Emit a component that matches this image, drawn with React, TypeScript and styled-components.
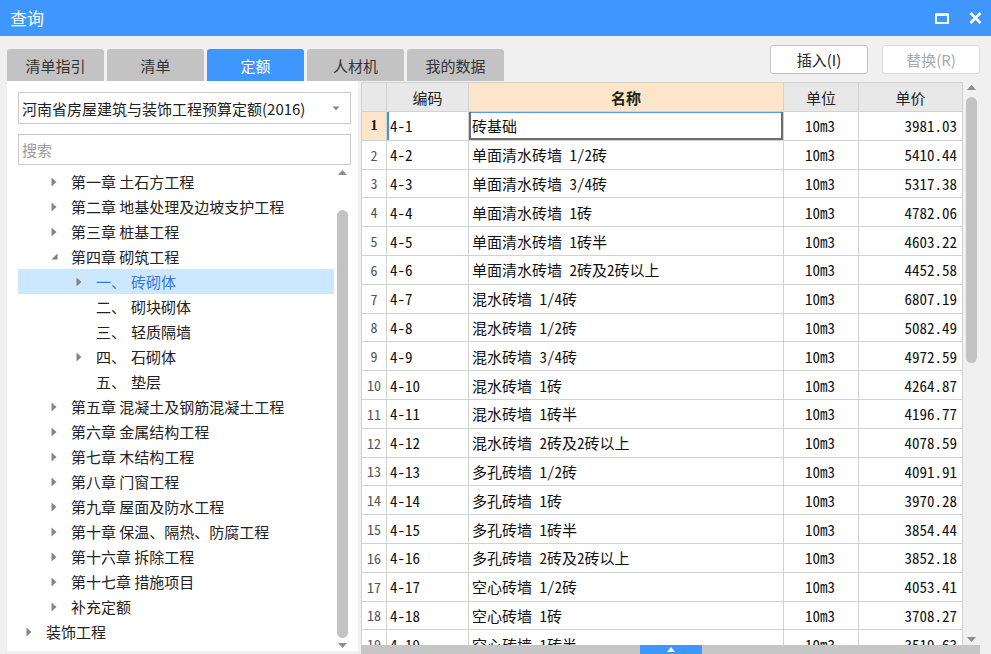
import React from "react";
import styled, { createGlobalStyle } from "styled-components";

const GlobalStyle = createGlobalStyle`
  html, body {
    margin: 0;
    padding: 0;
    overflow: hidden;
  }
  * {
    box-sizing: border-box;
  }
`;

const UI_FONT = `"Noto Sans CJK SC", "Noto Sans", sans-serif`;
const GRID_FONT = `"Noto Sans Mono CJK SC", "Noto Sans CJK SC", monospace`;

type TreeItem = {
  level: number;
  label: string;
  num?: string;
  arrow?: "closed" | "open";
  selected?: boolean;
};

const treeItems: TreeItem[] = [
  { level: 1, label: "第一章 土石方工程", arrow: "closed" },
  { level: 1, label: "第二章 地基处理及边坡支护工程", arrow: "closed" },
  { level: 1, label: "第三章 桩基工程", arrow: "closed" },
  { level: 1, label: "第四章 砌筑工程", arrow: "open" },
  { level: 2, num: "一、", label: "砖砌体", arrow: "closed", selected: true },
  { level: 2, num: "二、", label: "砌块砌体" },
  { level: 2, num: "三、", label: "轻质隔墙" },
  { level: 2, num: "四、", label: "石砌体", arrow: "closed" },
  { level: 2, num: "五、", label: "垫层" },
  { level: 1, label: "第五章 混凝土及钢筋混凝土工程", arrow: "closed" },
  { level: 1, label: "第六章 金属结构工程", arrow: "closed" },
  { level: 1, label: "第七章 木结构工程", arrow: "closed" },
  { level: 1, label: "第八章 门窗工程", arrow: "closed" },
  { level: 1, label: "第九章 屋面及防水工程", arrow: "closed" },
  { level: 1, label: "第十章 保温、隔热、防腐工程", arrow: "closed" },
  { level: 1, label: "第十六章 拆除工程", arrow: "closed" },
  { level: 1, label: "第十七章 措施项目", arrow: "closed" },
  { level: 1, label: "补充定额", arrow: "closed" },
  { level: 0, label: "装饰工程", arrow: "closed" },
];

const rows: [string, string, string, string][] = [
  ["4-1", "砖基础", "10m3", "3981.03"],
  ["4-2", "单面清水砖墙 1/2砖", "10m3", "5410.44"],
  ["4-3", "单面清水砖墙 3/4砖", "10m3", "5317.38"],
  ["4-4", "单面清水砖墙 1砖", "10m3", "4782.06"],
  ["4-5", "单面清水砖墙 1砖半", "10m3", "4603.22"],
  ["4-6", "单面清水砖墙 2砖及2砖以上", "10m3", "4452.58"],
  ["4-7", "混水砖墙 1/4砖", "10m3", "6807.19"],
  ["4-8", "混水砖墙 1/2砖", "10m3", "5082.49"],
  ["4-9", "混水砖墙 3/4砖", "10m3", "4972.59"],
  ["4-10", "混水砖墙 1砖", "10m3", "4264.87"],
  ["4-11", "混水砖墙 1砖半", "10m3", "4196.77"],
  ["4-12", "混水砖墙 2砖及2砖以上", "10m3", "4078.59"],
  ["4-13", "多孔砖墙 1/2砖", "10m3", "4091.91"],
  ["4-14", "多孔砖墙 1砖", "10m3", "3970.28"],
  ["4-15", "多孔砖墙 1砖半", "10m3", "3854.44"],
  ["4-16", "多孔砖墙 2砖及2砖以上", "10m3", "3852.18"],
  ["4-17", "空心砖墙 1/2砖", "10m3", "4053.41"],
  ["4-18", "空心砖墙 1砖", "10m3", "3708.27"],
  ["4-19", "空心砖墙 1砖半", "10m3", "3519.63"],
];

const tabs = ["清单指引", "清单", "定额", "人材机", "我的数据"];

const ArrowIcon = ({ open }: { open?: boolean }) =>
  open ? (
    <svg width="7" height="7" viewBox="0 0 7 7">
      <polygon points="6.5,0.5 6.5,6.5 0.5,6.5" fill="#7c7c7c" />
    </svg>
  ) : (
    <svg width="6" height="10" viewBox="0 0 6 10">
      <polygon points="0.5,0.5 5.5,5 0.5,9.5" fill="#858585" />
    </svg>
  );

const App = () => {
  return (
    <>
      <GlobalStyle />
      <Window>
        <TitleBar>
          <Title>查询</Title>
          <WinButtons>
            <svg width="14" height="11" viewBox="0 0 14 11">
              <rect x="1" y="1.5" width="12" height="8.5" fill="none" stroke="#fff" strokeWidth="2" />
              <rect x="1" y="0.5" width="12" height="2.5" fill="#fff" />
            </svg>
            <svg width="13" height="12" viewBox="0 0 13 12">
              <path d="M1.5 1 L11.5 11 M11.5 1 L1.5 11" stroke="#fff" strokeWidth="2.6" />
            </svg>
          </WinButtons>
        </TitleBar>

        <TopRow>
          <Tabs>
            {tabs.map((t) => (
              <Tab key={t} $active={t === "定额"}>
                {t}
              </Tab>
            ))}
          </Tabs>
          <ActionBar>
            <ActionButton>插入(I)</ActionButton>
            <ActionButton $disabled>替换(R)</ActionButton>
          </ActionBar>
        </TopRow>

        <Main>
          <LeftPanel>
            <Select>
              <span>河南省房屋建筑与装饰工程预算定额(2016)</span>
              <svg width="8" height="5" viewBox="0 0 8 5">
                <polygon points="0.5,0.5 7.5,0.5 4,4.5" fill="#8a8a8a" />
              </svg>
            </Select>
            <Search>搜索</Search>
            <TreeArea>
              <TreeList>
                {treeItems.map((item, i) => (
                  <TreeRow key={i} $level={item.level} $selected={item.selected}>
                    <ArrowBox>{item.arrow && <ArrowIcon open={item.arrow === "open"} />}</ArrowBox>
                    {item.num && <TreeNum>{item.num}</TreeNum>}
                    <span>{item.label}</span>
                  </TreeRow>
                ))}
              </TreeList>
              <VScroll $bg="#ffffff">
                <ScrollArrow>
                  <svg width="9" height="5" viewBox="0 0 9 5">
                    <polygon points="0,5 9,5 4.5,0" fill="#8c8c8c" />
                  </svg>
                </ScrollArrow>
                <Track>
                  <Thumb $top={32} $height={428} />
                </Track>
                <ScrollArrow>
                  <svg width="9" height="5" viewBox="0 0 9 5">
                    <polygon points="0,0 9,0 4.5,5" fill="#8c8c8c" />
                  </svg>
                </ScrollArrow>
              </VScroll>
            </TreeArea>
          </LeftPanel>

          <RightPanel>
            <GridWrap>
              <Grid>
                <HeaderRow>
                  <HeadCell />
                  <HeadCell>编码</HeadCell>
                  <HeadCell $active>名称</HeadCell>
                  <HeadCell>单位</HeadCell>
                  <HeadCell>单价</HeadCell>
                </HeaderRow>
                {rows.map((r, i) => (
                  <DataRow key={r[0]}>
                    <NumCell $active={i === 0}>{i + 1}</NumCell>
                    <Cell $focusCode={i === 0}>{r[0]}</Cell>
                    <Cell $focusName={i === 0}>{r[1]}</Cell>
                    <Cell $align="center">{r[2]}</Cell>
                    <Cell $align="right">{r[3]}</Cell>
                  </DataRow>
                ))}
              </Grid>
              <VScroll $bg="#f0f0f0">
                <ScrollArrow>
                  <svg width="9" height="5" viewBox="0 0 9 5">
                    <polygon points="0,5 9,5 4.5,0" fill="#8c8c8c" />
                  </svg>
                </ScrollArrow>
                <Track>
                  <Thumb $top={4} $height={266} />
                </Track>
                <ScrollArrow>
                  <svg width="9" height="5" viewBox="0 0 9 5">
                    <polygon points="0,0 9,0 4.5,5" fill="#8c8c8c" />
                  </svg>
                </ScrollArrow>
              </VScroll>
            </GridWrap>
            <HScroll>
              <SplitHandle>
                <svg width="8" height="5" viewBox="0 0 8 5">
                  <polygon points="0,5 8,5 4,0" fill="#fff" />
                </svg>
              </SplitHandle>
            </HScroll>
          </RightPanel>
        </Main>
      </Window>
    </>
  );
};

const Window = styled.div`
  width: 991px;
  height: 654px;
  display: flex;
  flex-direction: column;
  background: #f0f0f0;
  font-family: ${UI_FONT};
  overflow: hidden;
`;

const TitleBar = styled.div`
  height: 36px;
  flex: none;
  display: flex;
  align-items: center;
  padding: 0 9px 0 10px;
  background: #3f96fd;
  color: #fff;
`;

const Title = styled.div`
  flex: 1;
  font-size: 17px;
  line-height: 20px;
`;

const WinButtons = styled.div`
  display: flex;
  align-items: center;
  gap: 20px;
`;

const TopRow = styled.div`
  height: 45px;
  flex: none;
  display: flex;
  padding: 0 11px 0 7px;
`;

const Tabs = styled.div`
  flex: 1;
  display: flex;
  align-items: flex-end;
  gap: 3px;
`;

const Tab = styled.div<{ $active?: boolean }>`
  width: 97px;
  height: 32px;
  display: flex;
  align-items: center;
  justify-content: center;
  border-radius: 3px 3px 0 0;
  background: ${({ $active }) => ($active ? "#3f96fd" : "#c3c3c3")};
  color: ${({ $active }) => ($active ? "#ffffff" : "#333333")};
  font-size: 15px;
`;

const ActionBar = styled.div`
  display: flex;
  gap: 14px;
  padding-top: 9px;
`;

const ActionButton = styled.button<{ $disabled?: boolean }>`
  width: 98px;
  height: 29px;
  padding: 0;
  background: #ffffff;
  border: 1px solid ${({ $disabled }) => ($disabled ? "#dadada" : "#c2c2c2")};
  border-radius: 3px;
  color: ${({ $disabled }) => ($disabled ? "#aaaaaa" : "#222222")};
  font-family: ${UI_FONT};
  font-size: 15px;
`;

const Main = styled.div`
  flex: 1;
  min-height: 0;
  display: flex;
  gap: 3px;
  padding: 0 11px 0 7px;
`;

const LeftPanel = styled.div`
  width: 351px;
  margin-bottom: 3px;
  display: flex;
  flex-direction: column;
  padding: 11px 7px 0 11px;
  background: #ffffff;
`;

const Select = styled.div`
  height: 32px;
  flex: none;
  display: flex;
  align-items: center;
  justify-content: space-between;
  padding: 0 10px 0 3px;
  border: 1px solid #cacaca;
  color: #222;
  font-size: 15px;
  white-space: nowrap;
`;

const Search = styled.div`
  height: 31px;
  flex: none;
  margin-top: 10px;
  display: flex;
  align-items: center;
  padding: 0 3px;
  border: 1px solid #cacaca;
  color: #9a9a9a;
  font-size: 15px;
`;

const TreeArea = styled.div`
  flex: 1;
  min-height: 0;
  margin-top: 2px;
  display: flex;
`;

const TreeList = styled.div`
  flex: 1;
  padding-top: 2px;
  overflow: hidden;
`;

const TreeRow = styled.div<{ $level: number; $selected?: boolean }>`
  height: 25px;
  display: flex;
  align-items: center;
  padding-left: ${({ $level }) => 8 + $level * 25}px;
  background: ${({ $selected }) => ($selected ? "#cce8ff" : "transparent")};
  color: ${({ $selected }) => ($selected ? "#3a78d8" : "#222222")};
  font-size: 15px;
  white-space: nowrap;
`;

const ArrowBox = styled.div`
  width: 20px;
  flex: none;
  display: flex;
  align-items: center;
`;

const TreeNum = styled.span`
  margin-right: 5px;
`;

const VScroll = styled.div<{ $bg: string }>`
  width: 17px;
  flex: none;
  display: flex;
  flex-direction: column;
  align-items: center;
  background: ${({ $bg }) => $bg};
`;

const ScrollArrow = styled.div`
  height: 11px;
  flex: none;
  display: flex;
  align-items: center;
  justify-content: center;
`;

const Track = styled.div`
  flex: 1;
  width: 100%;
  display: flex;
  flex-direction: column;
  align-items: center;
`;

const Thumb = styled.div<{ $top: number; $height: number }>`
  width: 11px;
  margin-top: ${({ $top }) => $top}px;
  height: ${({ $height }) => $height}px;
  border-radius: 6px;
  background: #c3c3c3;
`;

const RightPanel = styled.div`
  flex: 1;
  margin-top: 1px;
  display: flex;
  flex-direction: column;
  min-height: 0;
`;

const GridWrap = styled.div`
  flex: 1;
  min-height: 0;
  display: flex;
`;

const Grid = styled.div`
  width: 602px;
  flex: none;
  overflow: hidden;
  background: #ffffff;
  border-left: 1px solid #d2d2d2;
  border-top: 1px solid #d2d2d2;
`;

const columns = "25px 82px 315px 75px 104px";

const HeaderRow = styled.div`
  height: 29px;
  display: grid;
  grid-template-columns: ${columns};
`;

const HeadCell = styled.div<{ $active?: boolean }>`
  display: flex;
  align-items: center;
  justify-content: center;
  border-right: 1px solid #d2d2d2;
  border-bottom: 1px solid #d2d2d2;
  background: ${({ $active }) => ($active ? "#fde5c9" : "#e8e8e8")};
  font-weight: ${({ $active }) => ($active ? 700 : 400)};
  color: #222;
  font-size: 15px;
`;

const DataRow = styled.div`
  height: 28.8px;
  display: grid;
  grid-template-columns: ${columns};
  font-family: ${GRID_FONT};
  font-size: 15px;
  color: #111;
`;

const NumCell = styled.div<{ $active?: boolean }>`
  display: flex;
  align-items: center;
  justify-content: center;
  border-right: 1px solid #d2d2d2;
  border-bottom: 1px solid #d2d2d2;
  background: ${({ $active }) => ($active ? "#fde5c9" : "#ffffff")};
  color: ${({ $active }) => ($active ? "#111" : "#555")};
  font-family: ${({ $active }) => ($active ? `"Liberation Serif", serif` : GRID_FONT)};
  font-weight: ${({ $active }) => ($active ? 700 : 400)};
  font-size: 14px;
`;

const Cell = styled.div<{
  $align?: "center" | "right";
  $focusCode?: boolean;
  $focusName?: boolean;
}>`
  display: flex;
  align-items: center;
  justify-content: ${({ $align }) =>
    $align === "center" ? "center" : $align === "right" ? "flex-end" : "flex-start"};
  padding: 0 5px 0 3px;
  border-right: 1px solid #d2d2d2;
  border-bottom: 1px solid #d2d2d2;
  white-space: nowrap;
  box-shadow: ${({ $focusCode, $focusName }) =>
    $focusCode
      ? "inset 2px 0 0 #4a8fe8"
      : $focusName
      ? "inset 2px 0 0 #6e6e6e, inset -2px 0 0 #6e6e6e, inset 0 -2px 0 #6e6e6e, inset 0 1px 0 #5a9be8"
      : "none"};
`;

const HScroll = styled.div`
  height: 9px;
  flex: none;
  display: flex;
  justify-content: center;
  background: #c6c6c6;
`;

const SplitHandle = styled.div`
  width: 62px;
  height: 100%;
  display: flex;
  align-items: center;
  justify-content: center;
  background: #3f96fd;
`;

export default App;
